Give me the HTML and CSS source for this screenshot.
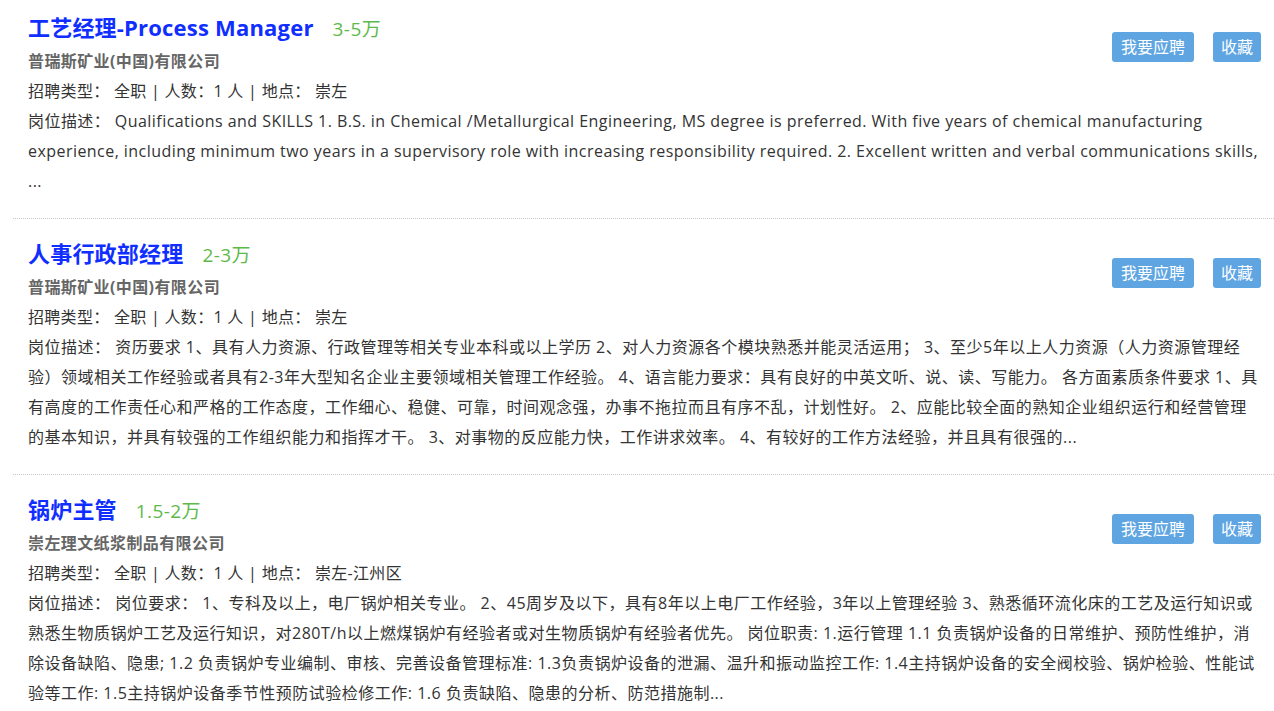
FILE: index.html
```html
<!DOCTYPE html>
<html lang="zh-CN">
<head>
  <meta charset="UTF-8">
  <title>职位列表</title>
  <link rel="stylesheet" href="styles.css">
</head>
<body>
  <div class="job-list">
    <div class="job">
      <div class="job-head">
        <div class="job-info">
          <h2 class="job-title"><a href="#">工艺经理-Process Manager</a><span class="salary">3-5万</span></h2>
          <p class="company">普瑞斯矿业(中国)有限公司</p>
          <p class="meta">招聘类型： 全职 | 人数：1 人 | 地点： 崇左</p>
        </div>
        <div class="actions">
          <a href="#" class="btn btn-apply">我要应聘</a>
          <a href="#" class="btn">收藏</a>
        </div>
      </div>
      <p class="desc desc-en">岗位描述： Qualifications and SKILLS 1. B.S. in Chemical /Metallurgical Engineering, MS degree is preferred. With five years of chemical manufacturing experience, including minimum two years in a supervisory role with increasing responsibility required. 2. Excellent written and verbal communications skills, ...</p>
    </div>

    <div class="job">
      <div class="job-head">
        <div class="job-info">
          <h2 class="job-title"><a href="#">人事行政部经理</a><span class="salary">2-3万</span></h2>
          <p class="company">普瑞斯矿业(中国)有限公司</p>
          <p class="meta">招聘类型： 全职 | 人数：1 人 | 地点： 崇左</p>
        </div>
        <div class="actions">
          <a href="#" class="btn btn-apply">我要应聘</a>
          <a href="#" class="btn">收藏</a>
        </div>
      </div>
      <p class="desc">岗位描述： 资历要求 1、具有人力资源、行政管理等相关专业本科或以上学历 2、对人力资源各个模块熟悉并能灵活运用； 3、至少5年以上人力资源（人力资源管理经验）领域相关工作经验或者具有2-3年大型知名企业主要领域相关管理工作经验。 4、语言能力要求：具有良好的中英文听、说、读、写能力。 各方面素质条件要求 1、具有高度的工作责任心和严格的工作态度，工作细心、稳健、可靠，时间观念强，办事不拖拉而且有序不乱，计划性好。 2、应能比较全面的熟知企业组织运行和经营管理的基本知识，并具有较强的工作组织能力和指挥才干。 3、对事物的反应能力快，工作讲求效率。 4、有较好的工作方法经验，并且具有很强的...</p>
    </div>

    <div class="job">
      <div class="job-head">
        <div class="job-info">
          <h2 class="job-title"><a href="#">锅炉主管</a><span class="salary">1.5-2万</span></h2>
          <p class="company">崇左理文纸浆制品有限公司</p>
          <p class="meta">招聘类型： 全职 | 人数：1 人 | 地点： 崇左-江州区</p>
        </div>
        <div class="actions">
          <a href="#" class="btn btn-apply">我要应聘</a>
          <a href="#" class="btn">收藏</a>
        </div>
      </div>
      <p class="desc">岗位描述： 岗位要求： 1、专科及以上，电厂锅炉相关专业。 2、45周岁及以下，具有8年以上电厂工作经验，3年以上管理经验 3、熟悉循环流化床的工艺及运行知识或熟悉生物质锅炉工艺及运行知识，对280T/h以上燃煤锅炉有经验者或对生物质锅炉有经验者优先。 岗位职责: 1.运行管理 1.1 负责锅炉设备的日常维护、预防性维护，消除设备缺陷、隐患; 1.2 负责锅炉专业编制、审核、完善设备管理标准: 1.3负责锅炉设备的泄漏、温升和振动监控工作: 1.4主持锅炉设备的安全阀校验、锅炉检验、性能试验等工作: 1.5主持锅炉设备季节性预防试验检修工作: 1.6 负责缺陷、隐患的分析、防范措施制...</p>
    </div>
  </div>
</body>
</html>
```

FILE: styles.css
```css
body {
  margin: 0;
  font-family: "Open Sans", "Noto Sans CJK SC", sans-serif;
  font-size: 16px;
  letter-spacing: 0.5px;
  color: #333;
  background: #fff;
}
p {
  margin: 0;
}
.job-list {
  margin-left: 13px;
}
.job {
  padding: 17px 12px 22px 15px;
  border-bottom: 1px dotted #c8c8c8;
}
.job:first-child {
  padding-top: 10px;
}
.job-head {
  display: flex;
  align-items: flex-start;
}
.job-info {
  flex: 1;
}
.job-title {
  margin: 0;
  font-size: 22px;
  line-height: 34px;
  font-weight: bold;
  letter-spacing: 0.2px;
}
.job-title a {
  color: #0f2eff;
  text-decoration: none;
}
.salary {
  margin-left: 19px;
  font-size: 19px;
  font-weight: normal;
  letter-spacing: 0.4px;
  color: #5dba4a;
}
.company {
  font-weight: bold;
  color: #666;
  line-height: 30px;
  letter-spacing: 0.4px;
}
.meta {
  line-height: 30px;
  letter-spacing: 0.3px;
}
.desc {
  line-height: 30px;
}
.desc-en {
  letter-spacing: 0.45px;
}
.actions {
  display: flex;
  gap: 19px;
  margin-top: 22px;
  margin-right: 1px;
}
.btn {
  display: block;
  height: 30px;
  line-height: 30px;
  padding: 0 8px;
  background-color: #5ea5e2;
  color: #fff;
  text-decoration: none;
  letter-spacing: 0;
  border-radius: 3px;
}
.btn-apply {
  padding: 0 9px;
}
```
